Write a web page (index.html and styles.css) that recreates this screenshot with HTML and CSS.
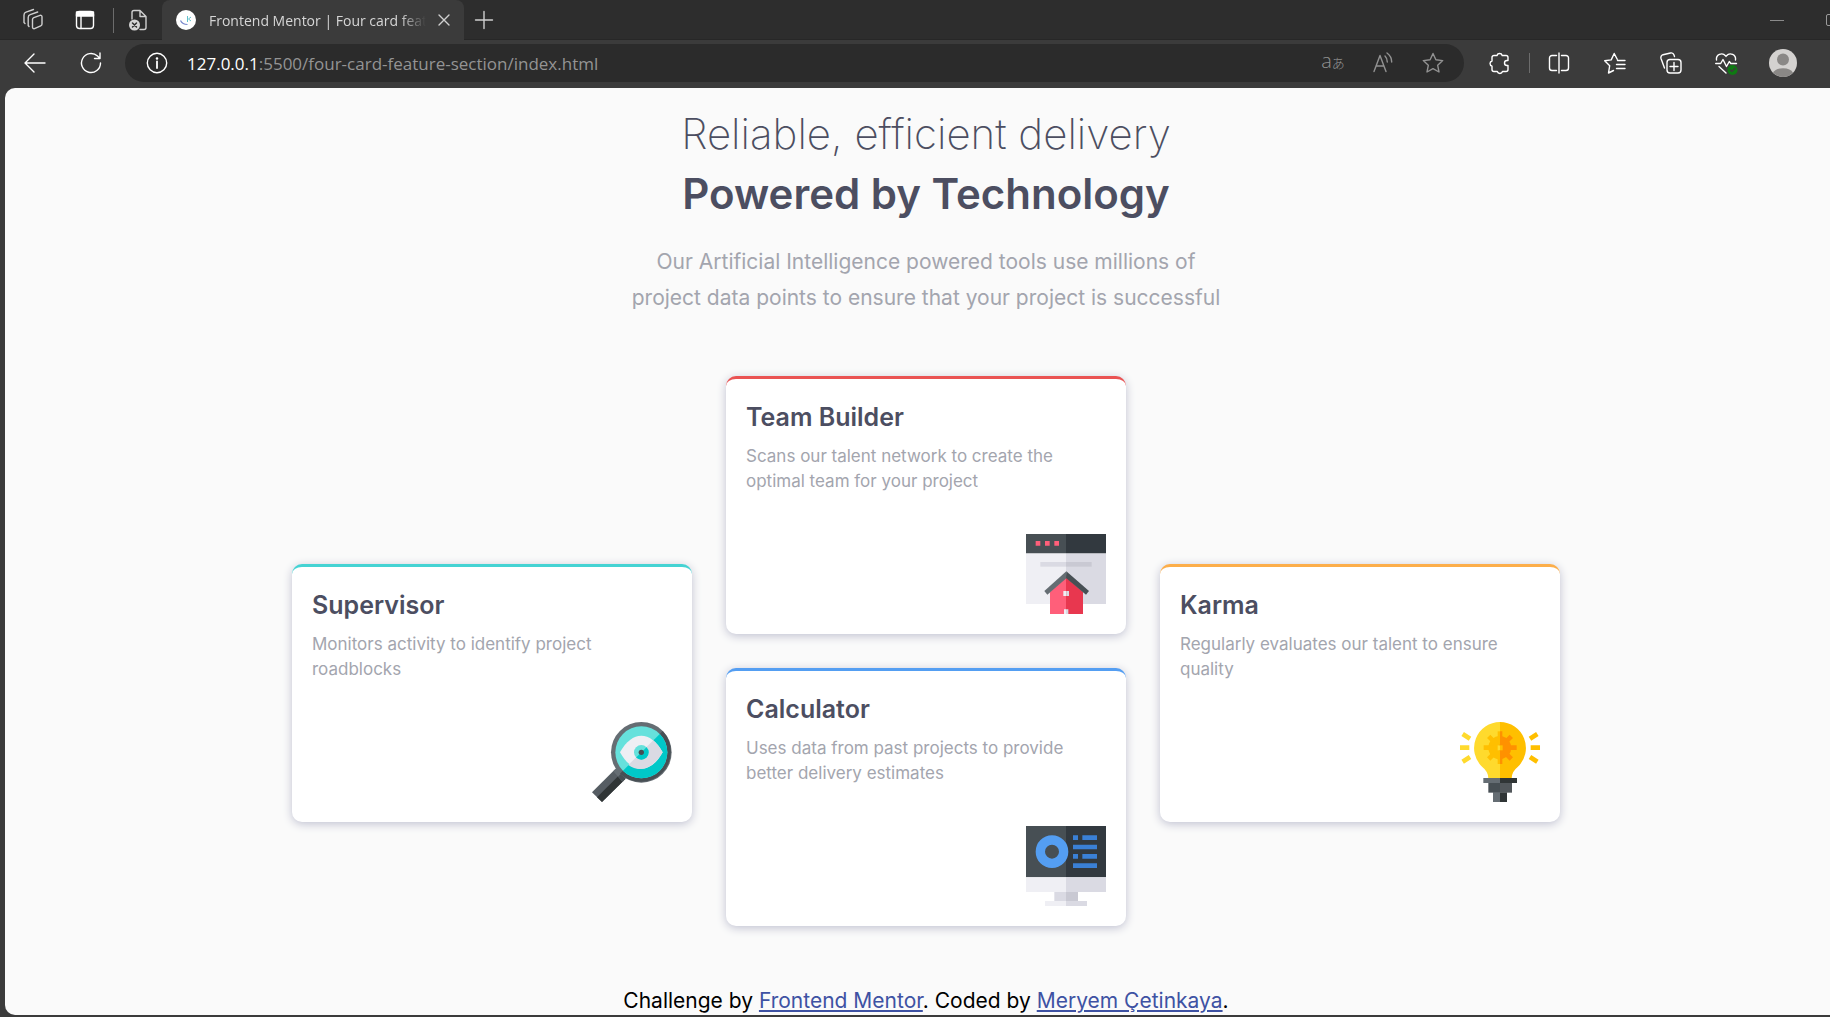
FILE: index.html
```html
<!DOCTYPE html>
<html lang="en">
<head>
  <meta charset="utf-8">
  <meta name="viewport" content="width=device-width, initial-scale=1">
  <title>Frontend Mentor | Four card feature section</title>
  <link rel="stylesheet" href="styles.css">
</head>
<body>
  <div class="tabs">
    <button class="slot slot-wide" type="button" aria-label="Workspaces">
      <svg class="icon muted" viewBox="0 0 24 24"><path d="M11.500 11.500a2 2 0 0 1 1.300-1.900L19 7.300a1.500 1.500 0 0 1 2 1.400v7.300a2 2 0 0 1-1.300 1.900L13.500 20.700a1.500 1.500 0 0 1-2-1.400zM8 18.500l-.8-1V9.500a3 3 0 0 1 2-2.800l7.500-2.700M4 15.500l-1-1V7a3 3 0 0 1 2-2.800L12.500 1.500"/></svg>
    </button>
    <button class="slot slot-wide" type="button" aria-label="Tab actions">
      <svg class="icon" viewBox="0 0 24 24"><rect x="3.500" y="3.500" width="17" height="17" rx="3"/><path d="M3.500 4h17v4h-17z" fill="#fff"/><path d="M8 8v12.500"/></svg>
    </button>
    <span class="divider tab-divider"></span>
    <button class="slot slot-doc" type="button" aria-label="Pinned document">
      <svg class="icon muted" viewBox="0 0 24 24"><path d="M6 11V4.500A2 2 0 0 1 8 2.500h6l6 6v11a2 2 0 0 1-2 2h-4M14 2.500v6h6"/><circle cx="8.500" cy="17" r="5.500" fill="#d5d5d5" stroke="none"/><path d="m6.500 15 4 4m0-4-4 4" stroke="#2c2c2c" stroke-width="1.500"/></svg>
    </button>
    <div class="tab">
      <svg class="favicon" viewBox="0 0 20 20"><circle cx="10" cy="10" r="10" fill="#fff"/><path d="M4.500 10.500c1.200 2.500 3.500 4 7 4" fill="none" stroke="#7888cc" stroke-width="1.200"/><path d="M11.500 6v6M15 7l-2.500 2 2.500 2" fill="none" stroke="#62c1cb"/></svg>
      <span class="tab-title">Frontend Mentor | Four card feature section</span>
      <button class="tab-close" type="button" aria-label="Close tab"><svg class="icon-small" viewBox="0 0 12 12"><path d="m1 1 10 10M11 1 1 11"/></svg></button>
    </div>
    <button class="slot slot-new" type="button" aria-label="New tab">
      <svg class="icon muted" viewBox="0 0 24 24"><path d="M12 3.500v17M3.500 12h17"/></svg>
    </button>
    <div class="window-controls">
      <button class="minimise" type="button" aria-label="Minimise"></button>
      <button class="maximise" type="button" aria-label="Maximise"></button>
    </div>
  </div>

  <div class="toolbar">
    <button class="slot" type="button" aria-label="Back"><svg class="icon" viewBox="0 0 24 24"><path d="M22 12H2.500M11 3l-9 9 9 9"/></svg></button>
    <button class="slot" type="button" aria-label="Refresh"><svg class="icon" viewBox="0 0 24 24"><path d="M21.500 12a9.500 9.500 0 1 1-3-6.900L21 7.500M21 2v5.500h-5.500"/></svg></button>
    <div class="address">
      <button class="slot slot-narrow" type="button" aria-label="Site information"><svg class="icon" viewBox="0 0 24 24"><circle cx="12" cy="12" r="9.700"/><path d="M12 10.500v6.500" stroke-width="1.800"/><circle cx="12" cy="7.500" r=".6" fill="#fff"/></svg></button>
      <span class="url"><b>127.0.0.1</b>:5500/four-card-feature-section/index.html</span>
      <button class="slot slot-narrow translate" type="button" aria-label="Translate"><span class="latin">a</span><span class="kana">あ</span></button>
      <button class="slot slot-narrow" type="button" aria-label="Read aloud"><svg class="icon dim" viewBox="0 0 24 24"><path d="M3 20.500 9 4.500l6 16M5 15h8M14 5c1.500 1.500 2.300 3.500 2.300 6M16 2c2.800 2 4.700 5 4.700 9"/></svg></button>
      <button class="slot slot-narrow" type="button" aria-label="Add to favourites"><svg class="icon dim" viewBox="0 0 24 24"><path d="m12 2.500 2.900 6.300 6.800.8-5 4.700 1.300 6.700-6-3.300L6 21l1.300-6.700-5-4.700 6.800-.8z"/></svg></button>
    </div>
    <button class="slot" type="button" aria-label="Extensions"><svg class="icon" viewBox="0 0 24 24"><path d="M6 4.500h3a2.700 2.700 0 0 1 5.200 0H18a2 2 0 0 1 2 2v3h-1a2.500 2.500 0 0 0 0 5h1v4a2 2 0 0 1-2 2h-3.500a2.700 2.700 0 0 1-5.200 0H6a2 2 0 0 1-2-2v-3.300a2.700 2.700 0 0 1 0-5.200v-3.500a2 2 0 0 1 2-2z"/></svg></button>
    <span class="divider"></span>
    <button class="slot" type="button" aria-label="Split screen"><svg class="icon" viewBox="0 0 24 24"><path d="M12 2v20M9.500 4.500H5a2.500 2.500 0 0 0-2.500 2.500v10A2.500 2.500 0 0 0 5 19.500h4.500M14.500 4.500H19a2.500 2.500 0 0 1 2.500 2.500v10a2.500 2.500 0 0 1-2.500 2.500h-4.500"/></svg></button>
    <button class="slot" type="button" aria-label="Favourites"><svg class="icon" viewBox="0 0 24 24"><path d="m10.500 19.500-5 2.500 1.200-7.300-5-4.900 6.500-.9L11.200 2.500l3 5.800M14.500 9.500H22M13.500 13.500H22M13.500 17.500H22"/></svg></button>
    <button class="slot" type="button" aria-label="Collections"><svg class="icon" viewBox="0 0 24 24"><rect x="8" y="8.500" width="14" height="13.500" rx="3"/><path d="M15 11.500v8M11 15.500h8M5.500 17 2 7.500a3 3 0 0 1 2-3.800L11.500 2a3 3 0 0 1 3.500 2l.5 1.500"/></svg></button>
    <button class="slot" type="button" aria-label="Browser essentials"><svg class="icon" viewBox="0 0 24 24"><path d="M1.500 9a5.200 5.200 0 0 1 9-4.300l.5.700.5-.7a5.200 5.200 0 0 1 9 4.300M.7 12.500h5l2.300-4 3.500 7 2.800-5 1.500 2H21.500M4 15.500l7 6.500"/><circle cx="17.500" cy="19" r="5" fill="#0e7a12" stroke="none"/><path d="m15.300 19 1.600 1.600 3-3" stroke="#3c3c3c"/></svg></button>
    <button class="slot" type="button" aria-label="Profile"><svg class="avatar" viewBox="0 0 28 28"><circle cx="14" cy="14" r="14" fill="#d4d2d0"/><circle cx="14" cy="10.500" r="6" fill="#8a8886"/><path d="M4 23.700a10.500 6.500 0 0 1 20 0A14 14 0 0 1 4 23.700" fill="#8a8886"/></svg></button>
  </div>

  <div class="page">
    <header class="intro">
      <h1 class="headline"><span class="headline-light">Reliable, efficient delivery</span><span class="headline-bold">Powered by Technology</span></h1>
      <p class="lead">Our Artificial Intelligence powered tools use millions of<br>project data points to ensure that your project is successful</p>
    </header>

    <main class="cards">
      <article class="card supervisor">
        <h2 class="card-title">Supervisor</h2>
        <p class="card-text">Monitors activity to identify project roadblocks</p>
        <svg class="card-icon" viewBox="0 0 240 240">
          <path d="m0 211 70-70 30 30-70 69z" fill="#565d63"/>
          <path d="m15 226 70-70 15 15-70 69z" fill="#303536"/>
          <path d="m64 148 10-10 28 28-10 14z" fill="#656d73"/>
          <path d="m78 164 14-14 14 14-14 14z" fill="#474f54"/>
          <circle cx="148" cy="91" r="91" fill="#656d73"/>
          <path d="M212.300 26.700A91 91 0 0 1 83.700 155.300z" fill="#474f54"/>
          <circle cx="148" cy="91" r="78" fill="#66e1dc"/>
          <path d="M203.200 35.800A78 78 0 0 1 92.800 146.200z" fill="#00c8c8"/>
          <path d="M84 91c36-66 92-66 128 0-36 66-92 66-128 0z" fill="#efeff4"/>
          <path d="M184 55q16 14 28 36c-28 50-70 62-103 38z" fill="#dadae3"/>
          <circle cx="148" cy="91" r="22" fill="#66e1dc"/>
          <path d="M163.600 75.400a22 22 0 0 1-31.200 31.200z" fill="#00c8c8"/>
          <circle cx="148" cy="91" r="8" fill="#474f54"/>
        </svg>
      </article>

      <article class="card team">
        <h2 class="card-title">Team Builder</h2>
        <p class="card-text">Scans our talent network to create the optimal team for your project</p>
        <svg class="card-icon" viewBox="0 0 240 240">
          <path d="M0 58h120v152H0z" fill="#efeff4"/><path d="M120 58h120v152H120z" fill="#dadae3"/>
          <path d="M0 0h120v58H0z" fill="#474f54"/><path d="M120 0h120v58H120z" fill="#32393f"/>
          <path d="M29 21h14v14H29zM57 21h14v14H57zM85 21h14v14H85z" fill="#ff5f7a"/>
          <path d="M43 84h77v14H43z" fill="#dadae3"/><path d="M120 84h77v14h-77z" fill="#c9c9d3"/>
          <path d="M72 174l48-44v110H72z" fill="#ff5f7a"/><path d="M120 130l51 44v66h-51z" fill="#e8374f"/>
          <path d="M121 112v21l-57 49-9-11z" fill="#656d73"/><path d="m121 112 68 59-9 11-60-50z" fill="#474f54"/>
          <path d="M112 171h9v15h-9zM114 226h6v14h-6z" fill="#efeff4"/><path d="M121 171h8v15h-8zM120 226h7v14h-7z" fill="#dadae3"/>
        </svg>
      </article>

      <article class="card calculator">
        <h2 class="card-title">Calculator</h2>
        <p class="card-text">Uses data from past projects to provide better delivery estimates</p>
        <svg class="card-icon" viewBox="0 0 240 240">
          <path d="M0 0h120v154H0z" fill="#474f54"/><path d="M120 0h120v154H120z" fill="#32393f"/>
          <path d="M0 154h120v44H0zM57 225h63v15H57z" fill="#efeff4"/><path d="M120 154h120v44H120zM85 198h35v27H85zM120 225h63v15h-63z" fill="#dadae3"/>
          <path d="M120 198h36v27h-36z" fill="#c9c9d3"/>
          <circle cx="78" cy="77" r="35" fill="none" stroke="#549ef2" stroke-width="28"/>
          <path d="M141 28h15v14h-15zM169 28h44v14h-44zM141 56h72v14h-72zM141 84h15v14h-15zM169 84h44v14h-44zM141 112h72v14h-72z" fill="#3a80d6"/>
        </svg>
      </article>

      <article class="card karma">
        <h2 class="card-title">Karma</h2>
        <p class="card-text">Regularly evaluates our talent to ensure quality</p>
        <svg class="card-icon" viewBox="0 0 240 240">
          <path d="M120 0a78 78 0 0 0-53 135q18 14 18 34h35z" fill="#ffda2d"/>
          <path d="M120 0a78 78 0 0 1 53 135q-18 14-18 34h-35z" fill="#ffbf00"/>
          <g stroke="#ffda2d" stroke-width="14"><path d="M0 77h28M8 36l22 14M8 119l22-14"/></g>
          <g stroke="#ffbf00" stroke-width="14"><path d="M212 77h28M232 36l-22 14M232 119l-22-14"/></g>
          <g fill="#ffbf00" stroke="#ffbf00" stroke-width="14"><path d="M120 49a28 28 0 0 0 0 56z"/><path d="M120 77H71M120 77 86 43M120 77l-34 34"/></g>
          <path d="M113 28h7v98h-7z" fill="#ffbf00"/>
          <g stroke="#ff9100" stroke-width="14"><path d="M120 77h50M120 77l34-34M120 77l34 34"/></g>
          <path d="M120 28h7v15a35 35 0 0 1 0 68v15h-7z" fill="#ff9100"/>
          <path d="M113 70h7v15h-7z" fill="#ffda2d"/><path d="M120 70h8v15h-8z" fill="#ffbf00"/>
          <path d="M70 168h50v15H70zM99 211h21v29H99z" fill="#656d73"/><path d="M120 168h51v15h-51zM120 211h21v29h-21z" fill="#303536"/>
          <path d="M85 183h35v29H85z" fill="#474f54"/><path d="M120 183h36v29h-36z" fill="#52575b"/>
        </svg>
      </article>
    </main>

    <footer class="attribution">Challenge by <a href="#mentor">Frontend Mentor</a>. Coded by <a href="#author">Meryem Çetinkaya</a>.</footer>
  </div>
</body>
</html>
```
FILE: styles.css
```css
* {
  box-sizing: border-box;
}

body {
  display: flex;
  flex-direction: column;
  min-height: 100vh;
  margin: 0;
  padding-bottom: 2px;
  background: #3b3b3b;
  font-family: Inter, "Open Sans", sans-serif;
  overflow-x: hidden;
}

button {
  padding: 0;
  border: 0;
  background: none;
  color: inherit;
}

/* Browser frame */
.tabs,
.toolbar {
  display: flex;
  align-items: center;
  font-family: "Open Sans", "Noto Sans CJK JP", sans-serif;
}

.tabs {
  height: 40px;
  padding-left: 7px;
  background: #2d2d2d;
  box-shadow: inset 0 -1px #272727;
}

.toolbar {
  height: 48px;
  padding: 0 19px 2px 7px;
}

.slot {
  display: flex;
  flex: none;
  align-items: center;
  justify-content: center;
  width: 56px;
  height: 38px;
}

.slot-wide {
  width: 52px;
}

.slot-narrow {
  width: 50px;
}

.slot-doc {
  width: 44px;
}

.slot-new {
  width: 40px;
}

.icon,
.icon-small {
  width: 24px;
  height: 24px;
  fill: none;
  stroke: #fff;
  stroke-width: 1.4;
  stroke-linecap: round;
  stroke-linejoin: round;
}

.icon-small {
  display: block;
  width: 12px;
  height: 12px;
  stroke: #d0d0d0;
}

.muted {
  stroke: #cfcfcf;
}

.dim {
  stroke: #929292;
}

.divider {
  flex: none;
  width: 1px;
  height: 20px;
  margin: 0 1px;
  background: #6c6c6c;
}

.tab-divider {
  height: 25px;
  margin: 0 2px;
}

.tab {
  display: flex;
  align-items: center;
  width: 302px;
  height: 40px;
  margin-left: 2px;
  padding: 0 14px;
  border-radius: 8px 8px 0 0;
  background: #3b3b3b;
  color: #d6d6d6;
  font-size: 14px;
}

.favicon {
  flex: none;
  width: 20px;
  height: 20px;
  margin-right: 13px;
}

.tab-title {
  flex: 1;
  overflow: hidden;
  white-space: nowrap;
  mask-image: linear-gradient(to right, #000 88%, transparent);
}

.tab-close {
  margin-left: 12px;
}

.window-controls {
  display: flex;
  align-items: center;
  gap: 42px;
  margin: 0 -8px 0 auto;
}

.minimise {
  width: 14px;
  height: 1px;
  background: #8a8a8a;
}

.maximise {
  width: 12px;
  height: 12px;
  border: 1px solid #9a9a9a;
  border-radius: 2px;
}

.address {
  display: flex;
  flex: 1;
  align-items: center;
  height: 38px;
  margin: 0 8px 0 6px;
  padding: 0 6px 0 7px;
  border-radius: 19px;
  background: #2b2b2b;
}

.url {
  flex: 1;
  margin-left: 5px;
  color: #949494;
  font-size: 17px;
  white-space: nowrap;
}

.url b {
  color: #fff;
  font-weight: 400;
}

.translate {
  align-items: baseline;
  color: #929292;
  font-family: "Open Sans", "Noto Sans CJK JP", sans-serif;
  font-weight: 300;
  line-height: 34px;
}

.latin {
  font-size: 20px;
}

.kana {
  font-size: 13px;
}

.avatar {
  width: 28px;
  height: 28px;
}

/* Page */
.page {
  flex: 1;
  margin-left: 5px;
  padding: 16px 0 0 17px;
  border-radius: 10px 0 0 10px;
  background: #fafafa;
}

.intro {
  text-align: center;
}

.headline {
  margin: 0;
  color: #4c4e61;
  font-size: 42px;
  line-height: 60px;
}

.headline span {
  display: block;
}

.headline-light {
  font-weight: 200;
}

.headline-bold {
  font-weight: 600;
}

.lead {
  margin: 20px 0 0;
  color: #a3a5ae;
  font-size: 21px;
  line-height: 36px;
}

.cards {
  display: grid;
  grid-template-areas:
    "supervisor team karma"
    "supervisor calculator karma";
  grid-template-columns: repeat(3, 400px);
  gap: 34px;
  justify-content: center;
  margin-top: 60px;
}

.card {
  display: flex;
  flex-direction: column;
  min-height: 258px;
  padding: 20px;
  border-top: 3px solid;
  border-radius: 10px;
  background: #fff;
  box-shadow: 0 2px 10px #bfc0d0;
}

.supervisor {
  grid-area: supervisor;
  border-color: #45d3d3;
}

.team {
  grid-area: team;
  border-color: #ea5353;
}

.calculator {
  grid-area: calculator;
  border-color: #549ef2;
}

.karma {
  grid-area: karma;
  border-color: #fcae4a;
}

.supervisor,
.karma {
  align-self: center;
  margin-top: 84px;
}

.card-title {
  margin: 0 0 9px;
  color: #4c4e61;
  font-size: 25px;
  font-weight: 600;
  line-height: 36px;
}

.card-text {
  margin: 0;
  color: #a3a5ae;
  font-size: 17px;
  line-height: 25px;
}

.card-icon {
  align-self: flex-end;
  width: 80px;
  height: 80px;
  margin-top: auto;
}

.attribution {
  margin-top: 61px;
  font-size: 21px;
  line-height: 28px;
  text-align: center;
}

.attribution a {
  color: #3e52a3;
}
```
